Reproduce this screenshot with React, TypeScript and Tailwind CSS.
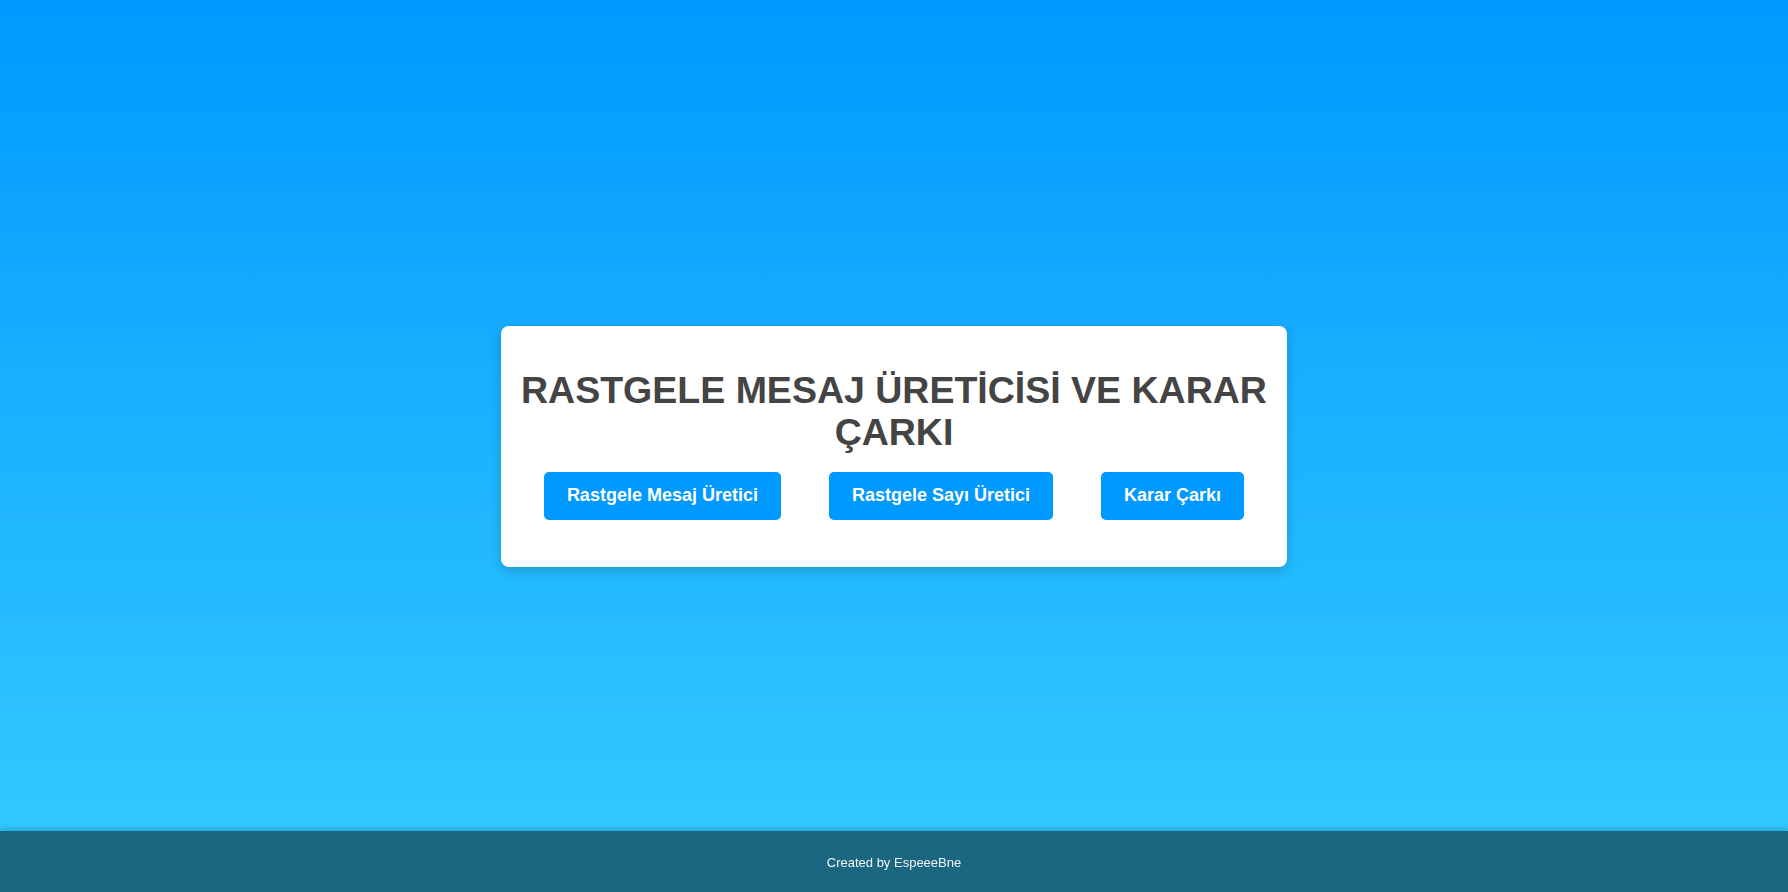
export default function App() {
  const tools = ["Rastgele Mesaj Üretici", "Rastgele Sayı Üretici", "Karar Çarkı"]

  return (
    <div className="min-h-screen bg-linear-to-b from-[#0099ff] to-[#33ccff] font-['Liberation_Sans',Arial,sans-serif]">
      <main className="h-screen flex items-center justify-center">
        <div className="w-[786px] bg-white rounded-[8px] shadow-[0_4px_12px_rgba(0,0,0,0.18)] pt-[43px] pb-[47px] px-[20px] text-center">
          <h1 className="text-[37.5px] leading-[42px] font-bold text-[#444444]">
            RASTGELE MESAJ ÜRETİCİSİ VE KARAR ÇARKI
          </h1>
          <div className="mt-[19px] flex justify-center gap-12">
            {tools.map((t) => (
              <button
                key={t}
                className="h-[48px] px-[23px] bg-[#0099ff] text-white text-[18px] font-bold rounded-[5px] hover:bg-[#0080dd]"
              >
                {t}
              </button>
            ))}
          </div>
        </div>
      </main>

      {/* footer */}
      <footer className="fixed bottom-0 left-0 right-0 h-[61px] pt-[2px] bg-[#1b6680] shadow-[0_-2px_6px_rgba(0,0,0,0.2)] flex items-center justify-center">
        <p className="text-[13px] text-[#f2f6f8]">Created by EspeeeBne</p>
      </footer>
    </div>
  )
}
